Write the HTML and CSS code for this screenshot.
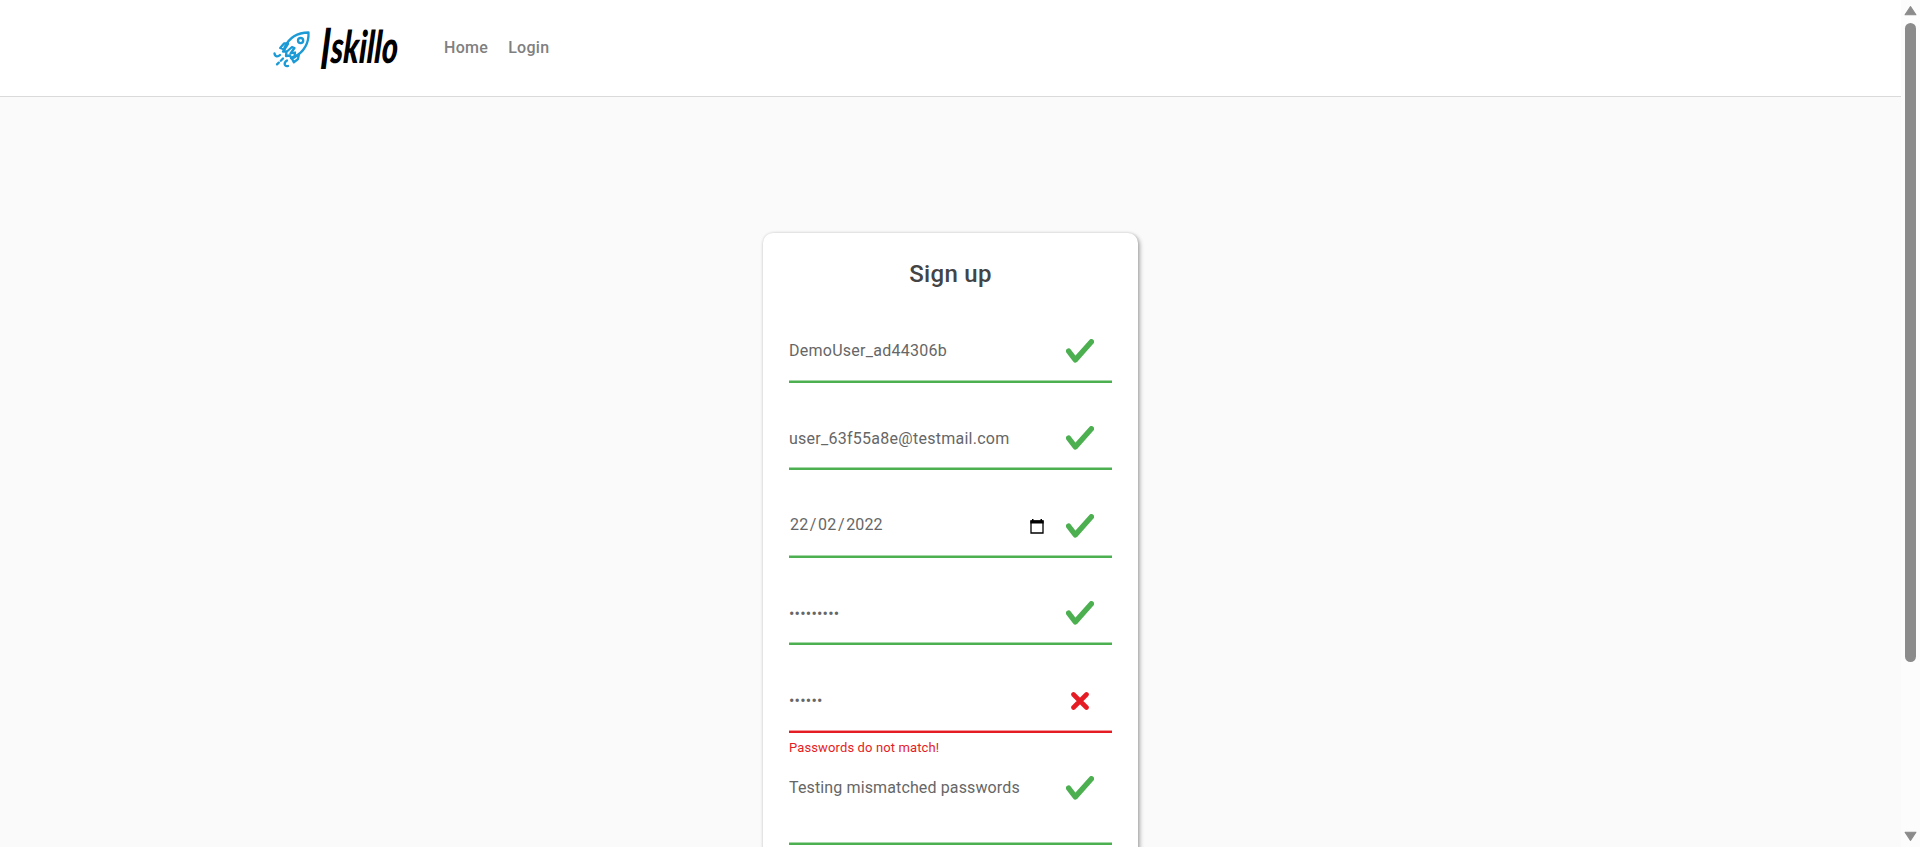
FILE: index.html
```html
<!DOCTYPE html>
<html lang="en">
<head>
<meta charset="utf-8">
<title>Iskillo</title>
<link rel="stylesheet" href="styles.css">
</head>
<body>
<svg class="defs" aria-hidden="true">
  <symbol id="check" viewBox="0 0 28 24"><path d="M2.6 12.2 L9.3 20.9 L25.4 2.8" fill="none" stroke="#4caf50" stroke-width="5.4" stroke-linecap="round" stroke-linejoin="round"/></symbol>
  <symbol id="cross" viewBox="0 0 18 18"><path d="M2.5 2.5 L15.5 15.5 M15.5 2.5 L2.5 15.5" fill="none" stroke="#e51c23" stroke-width="4.6" stroke-linecap="round"/></symbol>
</svg>
<div class="page">
  <div class="content">
    <header class="header">
      <a class="brand">
        <svg class="rocket" viewBox="0 0 38 38" fill="none" stroke="#1c9ad6" stroke-width="2.3" stroke-linecap="round" stroke-linejoin="round">
          <path d="M11.5 17.5 C16 8 23 2.5 35.5 2.5 C36 13 30.5 22 21 27.5"/>
          <circle cx="27.6" cy="10.6" r="2.6"/>
          <path d="M15 13.5 L11 13.5 L7.2 18 L11.5 19.5 L15 14"/>
          <path d="M26 24 L25 29 L20.8 32.3 L19 28.5 L25.5 24.5"/>
          <path d="M11.5 19 L10 21.5 L13.5 21.5 L13 26 L17 25.5 L18.5 28.5"/>
          <path d="M14.5 21 L19 17 L21.5 18 L17.5 23.5 L22 22.5 L21.5 26 L18 28"/>
          <path d="M1.5 23.5 C2 27 5 27 7 25"/>
          <path d="M14 30.5 C10.5 32.5 11 37 15 36"/>
          <path d="M10 28.5 L7.8 30.7 M5.8 32.6 L4 34.4"/>
        </svg>
        <span class="wordmark"><span class="initial">I</span>skillo</span>
      </a>
      <nav class="nav"><a>Home</a><a>Login</a></nav>
    </header>
    <main class="main">
      <form class="card">
        <h4 class="title">Sign up</h4>
        <div class="field"><span class="value">DemoUser_ad44306b</span><svg class="check"><use href="#check"/></svg></div>
        <div class="field"><span class="value low">user_63f55a8e@testmail.com</span><svg class="check"><use href="#check"/></svg></div>
        <div class="field"><span class="value date">22<i>/</i>02<i>/</i>2022</span>
          <svg class="calendar" viewBox="0 0 14 15"><path d="M1 2h12v12H1z" fill="none" stroke="#000" stroke-width="1.3"/><path d="M.4 1.4h13.2v3.2H.4zM2 0h1.5v2H2zM10.5 0H12v2h-1.5z"/></svg>
          <svg class="check"><use href="#check"/></svg></div>
        <div class="field"><span class="value dots low">•••••••••</span><svg class="check"><use href="#check"/></svg></div>
        <div class="field invalid"><span class="value dots">••••••</span><svg class="cross"><use href="#cross"/></svg></div>
        <p class="error">Passwords do not match!</p>
        <div class="field area"><span class="value">Testing mismatched passwords</span><svg class="check"><use href="#check"/></svg></div>
      </form>
    </main>
  </div>
  <div class="scrollbar">
    <svg class="arrow" viewBox="0 0 12 10"><path d="M6 1 L11 8.5 H1 Z"/></svg>
    <div class="thumb"></div>
    <svg class="arrow down" viewBox="0 0 12 10"><path d="M6 1 L11 8.5 H1 Z"/></svg>
  </div>
</div>
</body>
</html>
```
FILE: styles.css
```css
* { box-sizing: border-box; }
body { margin: 0; font-family: Roboto, "Liberation Sans", sans-serif; font-size: 16px; line-height: 24px; overflow: hidden; }
.defs { display: none; }
.page { display: flex; height: 847px; background: #fafafa; overflow: hidden; }
.content { flex: 1; display: flex; flex-direction: column; min-width: 0; }
.header { flex: none; height: 97px; background: #fff; border-bottom: 1px solid #dadada; display: flex; align-items: flex-start; padding: 27px 0 0 273px; }
.brand { display: flex; width: 171px; }
.rocket { width: 38px; height: 38px; margin-top: 3px; flex: none; }
.wordmark { margin: -1px 0 0 8px; font-family: Lato, Roboto, sans-serif; font-weight: 900; font-style: italic; font-size: 45px; line-height: 40px; height: 40px; color: #000; white-space: nowrap; transform: scaleX(.68) skewX(-5deg); transform-origin: 0 100%; }
.initial { display: inline-block; font-size: 57px; line-height: 0; transform: translateY(6px) scaleX(.85); }
.nav { display: flex; gap: 20px; padding-top: 9px; font-weight: 500; letter-spacing: .3px; color: #808080; }
.main { display: flex; justify-content: center; padding-top: 136px; }
.card { width: 375px; height: 760px; flex: none; background: #fff; border-radius: 10px; padding: 26px; box-shadow: 2px 2px 4px rgba(0,0,0,.3), 0 0 3px rgba(0,0,0,.15); }
.title { margin: 0; padding-top: 1px; font-size: 24px; line-height: 28px; font-weight: 500; letter-spacing: .3px; text-align: center; color: #444; }
.field { height: 62.5px; margin-top: 25px; border-bottom: 2px solid #4caf50; box-shadow: inset 0 -1px #a6d7a8; display: flex; align-items: flex-start; padding: 18px 18px 0 0; color: #666; letter-spacing: .26px; }
.field:nth-child(even) { padding-top: 19px; }
.title + .field { margin-top: 32.4px; }
.value { flex: 1; white-space: nowrap; }
.value.low { padding-top: 1px; }
.value.date { padding-left: 1px; margin-top: -1px; letter-spacing: .16px; }
.value.dots { letter-spacing: .2px; }
.value i { font-style: normal; padding: 0 1.5px; }
.check { width: 28px; height: 24px; }
.cross { width: 18px; height: 18px; margin: 3px 5px 0 0; }
.calendar { width: 14px; height: 15px; margin: 4.6px 22px 0 0; }
.invalid { border-color: #e51c23; box-shadow: inset 0 -1px #f39a9d; }
.error { margin: 4px 0 0; font-size: 13px; line-height: 22px; letter-spacing: .12px; color: #e51c23; }
.field.area { height: 86px; margin-top: 0; padding-top: 17px; letter-spacing: .13px; }
.scrollbar { width: 19px; background: #fcfcfc; display: flex; flex-direction: column; align-items: center; padding: 5px 0 0; }
.arrow { width: 13px; height: 12px; fill: #8b8b8b; stroke: #8b8b8b; stroke-linejoin: round; }
.thumb { width: 11px; height: 639px; margin: 6px 0 168px; border-radius: 6px; background: #8b8b8b; }
.down { transform: scaleY(-1); }
```
